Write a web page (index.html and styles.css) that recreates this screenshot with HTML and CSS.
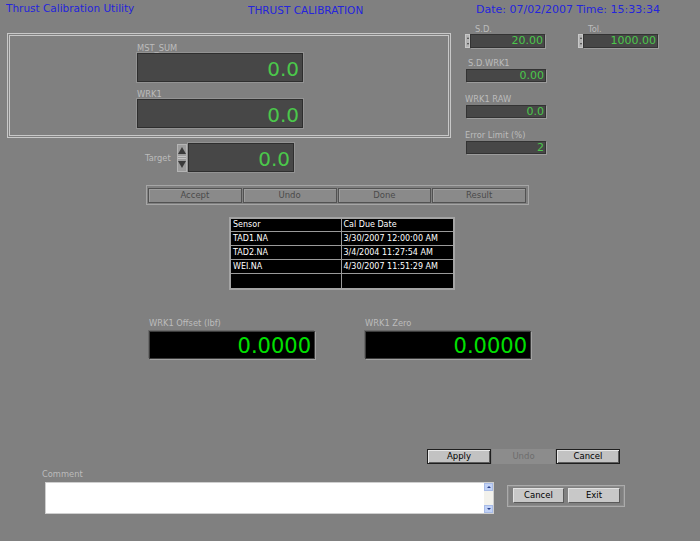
FILE: index.html
```html
<!DOCTYPE html>
<html>
<head>
<meta charset="utf-8">
<title>Thrust Calibration Utility</title>
<link rel="stylesheet" href="styles.css">
</head>
<body>
<div class="app">
  <header class="topbar">
    <span class="title">Thrust Calibration Utility</span>
    <span class="heading">THRUST CALIBRATION</span>
    <span class="datetime">Date: 07/02/2007 Time: 15:33:34</span>
  </header>

  <section class="upper">
    <div class="left-col">
      <div class="group-box">
        <div class="field-stack">
          <div class="lbl">MST_SUM</div>
          <div class="readout">0.0</div>
          <div class="lbl lbl-gap">WRK1</div>
          <div class="readout">0.0</div>
        </div>
      </div>
      <div class="target-row">
        <span class="lbl target-lbl">Target</span>
        <div class="spinner">
          <span class="tri-up"></span>
          <span class="sep"></span>
          <span class="tri-down"></span>
        </div>
        <div class="readout target">0.0</div>
      </div>
    </div>

    <div class="right-col">
      <div class="pair">
        <div class="mini-group">
          <div class="lbl sd-lbl">S.D.</div>
          <div class="spin-field">
            <div class="mini-spin"><i class="mu"></i><i class="md"></i></div>
            <div class="mini-field">20.00</div>
          </div>
        </div>
        <div class="mini-group">
          <div class="lbl sd-lbl">Tol.</div>
          <div class="spin-field">
            <div class="mini-spin"><i class="mu"></i><i class="md"></i></div>
            <div class="mini-field">1000.00</div>
          </div>
        </div>
      </div>
      <div class="lbl r-lbl first">S.D.WRK1</div>
      <div class="mini-field solo">0.00</div>
      <div class="lbl r-lbl">WRK1 RAW</div>
      <div class="mini-field solo">0.0</div>
      <div class="lbl r-lbl">Error Limit (%)</div>
      <div class="mini-field solo">2</div>
    </div>
  </section>

  <div class="btn-strip">
    <button class="strip-btn">Accept</button>
    <button class="strip-btn">Undo</button>
    <button class="strip-btn">Done</button>
    <button class="strip-btn">Result</button>
  </div>

  <table class="sensors">
    <colgroup><col class="c1"><col class="c2"></colgroup>
    <tr class="hdr"><td>Sensor</td><td>Cal Due Date</td></tr>
    <tr><td>TAD1.NA</td><td>3/30/2007 12:00:00 AM</td></tr>
    <tr><td>TAD2.NA</td><td>3/4/2004 11:27:54 AM</td></tr>
    <tr><td>WEI.NA</td><td>4/30/2007 11:51:29 AM</td></tr>
    <tr class="empty"><td></td><td></td></tr>
  </table>

  <div class="offsets">
    <div class="offset-group">
      <div class="lbl">WRK1 Offset (lbf)</div>
      <div class="big-readout">0.0000</div>
    </div>
    <div class="offset-group">
      <div class="lbl">WRK1 Zero</div>
      <div class="big-readout">0.0000</div>
    </div>
  </div>

  <div class="action-bar">
    <button class="act-btn">Apply</button>
    <button class="act-btn disabled">Undo</button>
    <button class="act-btn">Cancel</button>
  </div>

  <div class="bottom-row">
    <div class="comment-group">
      <div class="lbl">Comment</div>
      <div class="comment-box">
        <div class="comment-text"></div>
        <div class="vscroll">
          <span class="sb-btn"><i class="sb-up"></i></span>
          <span class="sb-btn"><i class="sb-down"></i></span>
        </div>
      </div>
    </div>
    <div class="exit-frame">
      <button class="frame-btn cancel">Cancel</button>
      <button class="frame-btn exit">Exit</button>
    </div>
  </div>
</div>
</body>
</html>
```

FILE: styles.css
```css
* { box-sizing: border-box; }
html, body { margin: 0; padding: 0; }
body {
  background: #808080;
  font-family: "DejaVu Sans", Verdana, sans-serif;
}
.app {
  width: 700px;
  height: 541px;
  overflow: hidden;
  background: #808080;
}

/* header */
.topbar {
  display: grid;
  grid-template-columns: 248px 228px 1fr;
  height: 24px;
  color: #2424dc;
  white-space: nowrap;
}
.title { padding: 2px 0 0 6px; font-size: 10.5px; line-height: 13px; }
.heading { padding-top: 4px; font-size: 10.5px; line-height: 13px; }
.datetime { padding-top: 3px; font-size: 11px; line-height: 13px; }

/* labels */
.lbl {
  font-size: 8.3px;
  line-height: 10px;
  color: #bcbcbc;
  white-space: nowrap;
}

/* upper area */
.upper { display: flex; }
.left-col { width: 451px; padding-left: 7px; }
.group-box {
  margin-top: 9px;
  height: 105px;
  border: 3px double #c8c8c8;
}
.field-stack {
  margin-left: 127px;
  padding-top: 7px;
  width: 166px;
}
.lbl-gap { margin-top: 7px; }
.readout {
  height: 29px;
  background: #474747;
  border: 1px solid #2e2e2e;
  box-shadow: 0 0 0 1px #939393;
  color: #4bc84b;
  font-size: 20px;
  line-height: 23px;
  padding: 4px 3px 0 0;
  text-align: right;
}
.target-row {
  display: flex;
  align-items: center;
  margin-top: 5px;
  padding-left: 138px;
}
.target-lbl { width: 32px; }
.spinner {
  width: 10px;
  height: 28px;
  background: #9c9c9c;
  border: 1px solid #b4b4b4;
  display: flex;
  flex-direction: column;
  align-items: center;
  justify-content: space-between;
  padding: 2px 0 3px;
}
.tri-up {
  width: 0; height: 0;
  border-left: 4px solid transparent;
  border-right: 4px solid transparent;
  border-bottom: 7px solid #3a3a3a;
}
.tri-down {
  width: 0; height: 0;
  border-left: 4px solid transparent;
  border-right: 4px solid transparent;
  border-top: 7px solid #3a3a3a;
}
.sep {
  width: 8px;
  height: 3px;
  border-top: 1px solid #c4c4c4;
  border-bottom: 1px solid #c4c4c4;
}
.readout.target {
  width: 106px;
  margin-left: 1px;
}

/* right column */
.right-col { margin-left: 14px; width: 200px; }
.pair { display: flex; gap: 33px; }
.mini-group { width: 80px; }
.sd-lbl { padding-left: 10px; }
.spin-field { display: flex; height: 14px; }
.mini-spin {
  width: 5px;
  height: 14px;
  background: #b2b2b2;
  border: 1px solid #c8c8c8;
  display: flex;
  flex-direction: column;
  align-items: center;
  justify-content: space-between;
  padding: 2px 0;
}
.mu, .md { display: block; width: 0; height: 0; border-left: 1.5px solid transparent; border-right: 1.5px solid transparent; }
.mu { border-bottom: 2px solid #404040; }
.md { border-top: 2px solid #404040; }
.mini-field {
  flex: 1;
  height: 14px;
  background: #474747;
  border: 1px solid #333;
  box-shadow: 1px 1px 0 #9c9c9c;
  color: #4bc84b;
  font-size: 11px;
  line-height: 12px;
  padding-right: 1px;
  text-align: right;
}
.mini-field.solo {
  width: 80px;
  height: 13px;
  margin: 1px 0 0 1px;
}
.r-lbl { margin-top: 12px; }
.r-lbl.first { margin-top: 10px; padding-left: 3px; }

/* button strip */
.btn-strip {
  display: flex;
  gap: 1px;
  margin: 13px 0 0 146px;
  width: 383px;
  height: 20px;
  border: 1px solid #a6a6a6;
  padding: 2px 2px 1px 1px;
}
.strip-btn {
  flex: 1;
  height: 15px;
  margin: 0;
  padding: 0;
  background: #8a8a8a;
  border: 1px solid #525252;
  box-shadow: inset 1px 1px 0 #9e9e9e;
  color: #4a4a4a;
  font-family: inherit;
  font-size: 8.5px;
  line-height: 13px;
  text-align: center;
}

/* table */
.sensors {
  margin: 12px 0 0 229px;
  width: 224px;
  border-collapse: collapse;
  border: 2px solid #a4a4a4;
  background: #000;
  color: #fff;
  font-size: 8px;
  table-layout: fixed;
}
.c1 { width: 111px; }
.c2 { width: 113px; }
.sensors td {
  border: 1px solid #9a9a9a;
  height: 14px;
  line-height: 12px;
  padding: 0 2px;
  white-space: nowrap;
}
.sensors .hdr td { height: 12px; }
.sensors .empty td { height: 15px; }

/* offsets */
.offsets {
  display: flex;
  gap: 50px;
  margin: 28px 0 0 149px;
}
.offset-group { width: 166px; }
.big-readout {
  margin-top: 3px;
  height: 28px;
  background: #000;
  border: 1px solid #3c3c3c;
  box-shadow: 1px 1px 0 #a2a2a2, -1px -1px 0 #6a6a6a;
  color: #00e000;
  font-size: 21px;
  line-height: 24px;
  padding: 2px 3px 0 0;
  text-align: right;
}

/* action bar */
.action-bar {
  display: flex;
  gap: 1px;
  margin: 90px 0 0 427px;
  width: 193px;
}
.act-btn {
  width: 64px;
  height: 15px;
  margin: 0;
  padding: 0;
  background: #c2c2c2;
  border: 1px solid #1e1e1e;
  box-shadow: inset 1px 1px 0 #e8e8e8, inset -1px -1px 0 #5c5c5c;
  color: #000;
  font-family: inherit;
  font-size: 8.5px;
  line-height: 12px;
  text-align: center;
}
.act-btn.disabled {
  width: 63px;
  background: #8c8c8c;
  border-color: #8c8c8c;
  box-shadow: none;
  color: #6c6c6c;
}

/* bottom row */
.bottom-row {
  display: flex;
  align-items: flex-start;
  margin-top: 5px;
}
.comment-group { margin-left: 42px; }
.comment-box {
  display: flex;
  margin: 3px 0 0 3px;
  width: 449px;
  height: 32px;
  background: #fff;
  border: 1px solid #cfcfcf;
}
.comment-text { flex: 1; }
.vscroll {
  width: 9px;
  background: #f3f2ec;
  display: flex;
  flex-direction: column;
  justify-content: space-between;
}
.sb-btn {
  height: 8px;
  background: #c2d2f6;
  border: 1px solid #a8bce8;
  display: flex;
  align-items: center;
  justify-content: center;
}
.sb-up, .sb-down { display: block; width: 0; height: 0; border-left: 2px solid transparent; border-right: 2px solid transparent; }
.sb-up { border-bottom: 2px solid #28408a; }
.sb-down { border-top: 2px solid #28408a; }

.exit-frame {
  display: flex;
  gap: 4px;
  margin: 16px 0 0 13px;
  width: 118px;
  height: 22px;
  border: 1px solid #ababab;
  box-shadow: inset 0 0 0 1px #8c8c8c;
  padding: 2px 4px 3px 5px;
}
.frame-btn {
  height: 15px;
  margin: 0;
  padding: 0;
  background: #c8c8c8;
  border: 1px solid #5a5a5a;
  border-top-color: #e2e2e2;
  border-left-color: #e2e2e2;
  color: #000;
  font-family: inherit;
  font-size: 8.5px;
  line-height: 12px;
  text-align: center;
}
.frame-btn.cancel { width: 51px; }
.frame-btn.exit { width: 52px; }
```
